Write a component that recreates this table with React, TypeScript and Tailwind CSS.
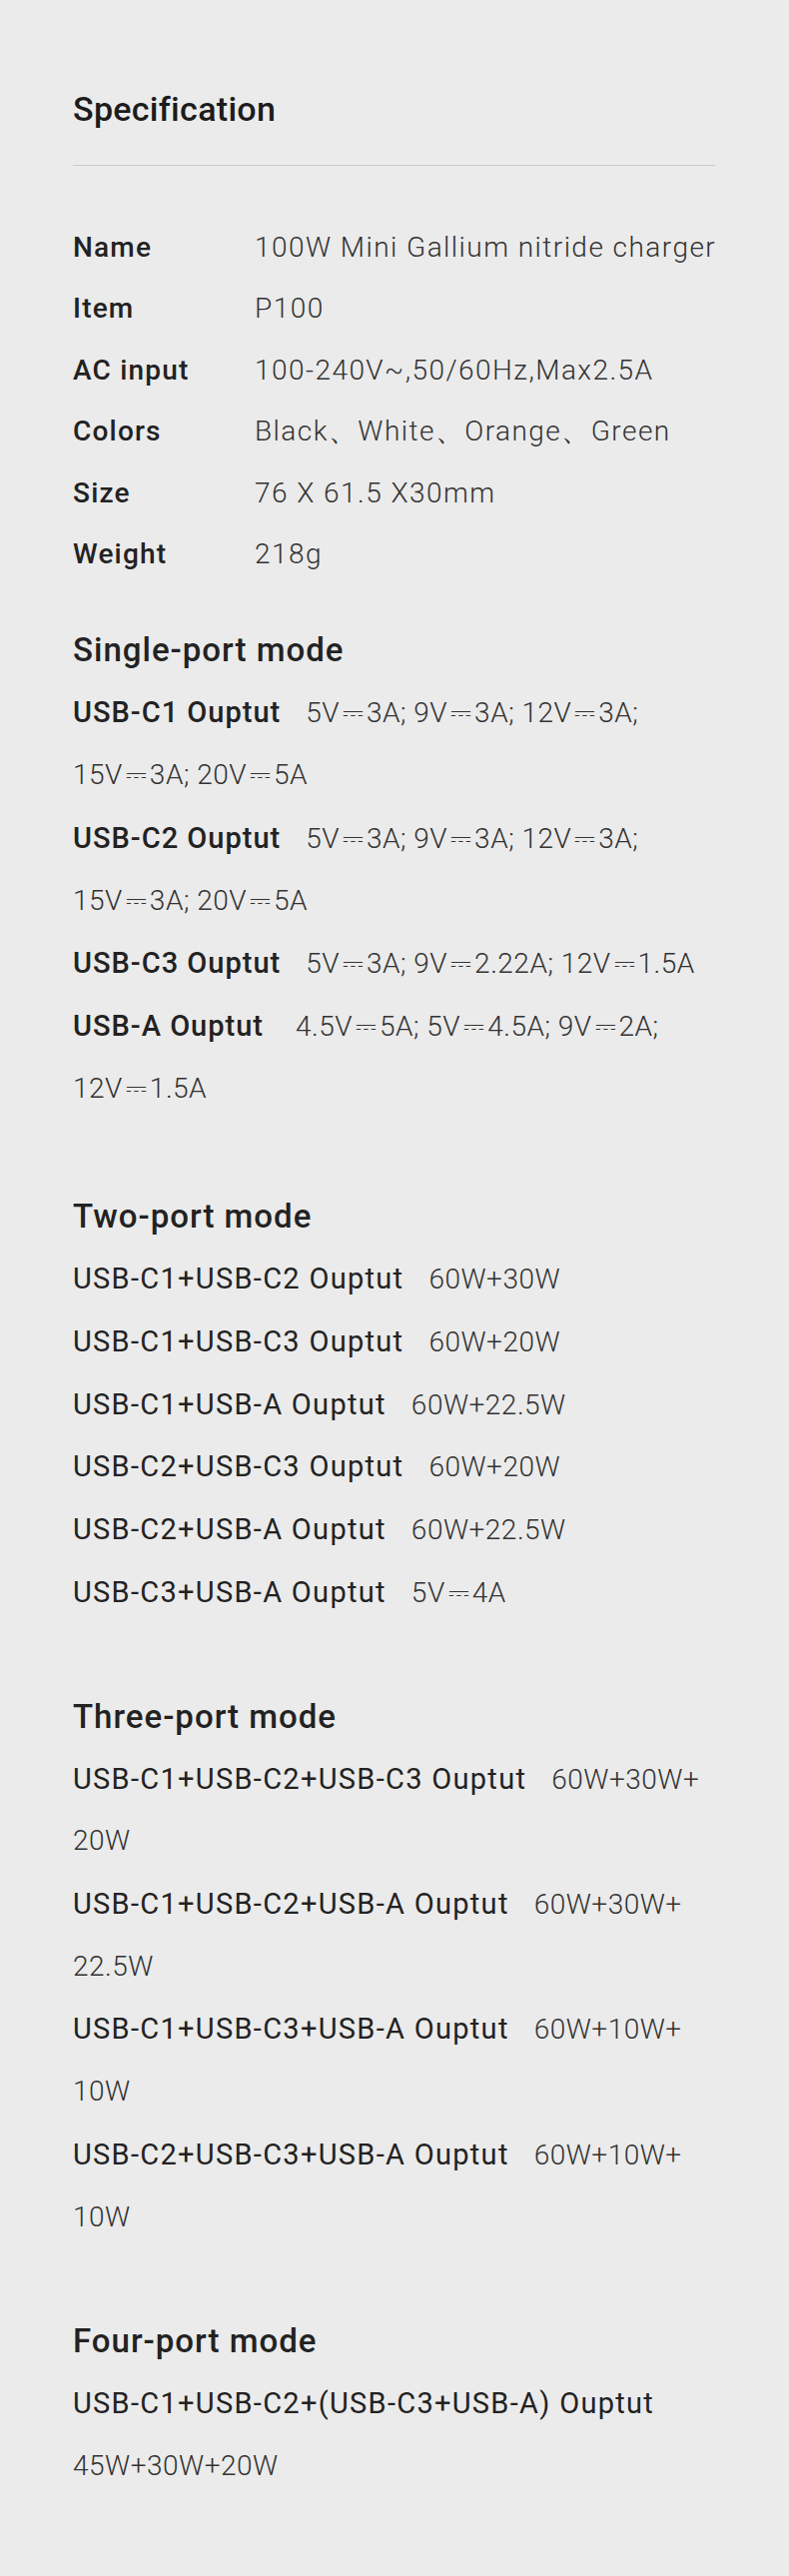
import React from 'react';

const DC = '⎓';

const specs = [
  { label: 'Name', value: '100W Mini Gallium nitride charger' },
  { label: 'Item', value: 'P100' },
  { label: 'AC input', value: '100-240V~,50/60Hz,Max2.5A' },
  { label: 'Colors', value: 'Black、White、Orange、Green' },
  { label: 'Size', value: '76 X 61.5 X30mm' },
  { label: 'Weight', value: '218g' },
];

interface PortRow {
  label: string;
  lines: string[];
  gap?: string;
}

const single: PortRow[] = [
  { label: 'USB-C1 Ouptut', lines: [`5V${DC}3A; 9V${DC}3A; 12V${DC}3A;`, `15V${DC}3A; 20V${DC}5A`] },
  { label: 'USB-C2 Ouptut', lines: [`5V${DC}3A; 9V${DC}3A; 12V${DC}3A;`, `15V${DC}3A; 20V${DC}5A`] },
  { label: 'USB-C3 Ouptut', lines: [`5V${DC}3A; 9V${DC}2.22A; 12V${DC}1.5A`] },
  { label: 'USB-A Ouptut', lines: [`4.5V${DC}5A; 5V${DC}4.5A; 9V${DC}2A;`, `12V${DC}1.5A`], gap: 'ml-[32px]' },
];

const two: PortRow[] = [
  { label: 'USB-C1+USB-C2 Ouptut', lines: ['60W+30W'] },
  { label: 'USB-C1+USB-C3 Ouptut', lines: ['60W+20W'] },
  { label: 'USB-C1+USB-A Ouptut', lines: ['60W+22.5W'] },
  { label: 'USB-C2+USB-C3 Ouptut', lines: ['60W+20W'] },
  { label: 'USB-C2+USB-A Ouptut', lines: ['60W+22.5W'] },
  { label: 'USB-C3+USB-A Ouptut', lines: [`5V${DC}4A`] },
];

const three: PortRow[] = [
  { label: 'USB-C1+USB-C2+USB-C3 Ouptut', lines: ['60W+30W+', '20W'] },
  { label: 'USB-C1+USB-C2+USB-A Ouptut', lines: ['60W+30W+', '22.5W'] },
  { label: 'USB-C1+USB-C3+USB-A Ouptut', lines: ['60W+10W+', '10W'] },
  { label: 'USB-C2+USB-C3+USB-A Ouptut', lines: ['60W+10W+', '10W'] },
];

const four: PortRow[] = [
  { label: 'USB-C1+USB-C2+(USB-C3+USB-A) Ouptut', lines: ['', '45W+30W+20W'] },
];

function Value({ text, wide }: { text: string; wide?: boolean }) {
  // split out the DC symbol so it can be sized like the reference
  const parts = text.split(DC);
  return (
    <span className={`font-light text-[#333] ${wide ? 'tracking-[1.45px]' : 'tracking-[0.5px]'}`}>
      {parts.map((p, i) => (
        <React.Fragment key={i}>
          {i > 0 && <span className="text-[26px] leading-none align-[1px] mx-[3px] tracking-normal">{DC}</span>}
          {p}
        </React.Fragment>
      ))}
    </span>
  );
}

function Mode({ title, rows, bold }: { title: string; rows: PortRow[]; bold?: boolean }) {
  return (
    <section>
      <h3 className="text-[33px] leading-[62px] font-medium tracking-[1px] text-[#222]">{title}</h3>
      <div>
        {rows.map(row => (
          <div key={row.label}>
            <div className="whitespace-nowrap text-[29px] leading-[62.7px]">
              <span className={`text-[#222] ${bold ? 'font-medium tracking-[1px]' : 'font-normal tracking-[1.3px]'}`}>
                {row.label}
              </span>
              {row.lines[0] && (
                <span className={`text-[28px] leading-none ${row.gap ?? 'ml-[25px]'}`}>
                  <Value text={row.lines[0]} />
                </span>
              )}
            </div>
            {row.lines.slice(1).map(line => (
              <div key={line} className="whitespace-nowrap text-[28px] leading-[62.7px]">
                <Value text={line} />
              </div>
            ))}
          </div>
        ))}
      </div>
    </section>
  );
}

export default function App() {
  return (
    <div className="min-h-[2579px] bg-[#ebebeb] px-[73px] pt-[78px] pb-[79px] font-['Roboto',sans-serif]">
      <h2 className="text-[34px] leading-[62px] font-medium tracking-[0.3px] text-[#1c1c1c]">Specification</h2>
      <div className="mt-[25px] h-px w-[643px] bg-[#c9c9c9]" />

      <div className="mt-[51px] text-[28px] leading-[61.4px]">
        {specs.map(s => (
          <div key={s.label} className="flex whitespace-nowrap">
            <span className="w-[182px] shrink-0 font-medium text-[#222] tracking-[1.2px]">{s.label}</span>
            <Value text={s.value} wide />
          </div>
        ))}
      </div>

      <div className="mt-[35px]">
        <Mode title="Single-port mode" rows={single} bold />
      </div>
      <div className="mt-[66px]">
        <Mode title="Two-port mode" rows={two} />
      </div>
      <div className="mt-[62px]">
        <Mode title="Three-port mode" rows={three} />
      </div>
      <div className="mt-[62px]">
        <Mode title="Four-port mode" rows={four} />
      </div>
    </div>
  );
}
